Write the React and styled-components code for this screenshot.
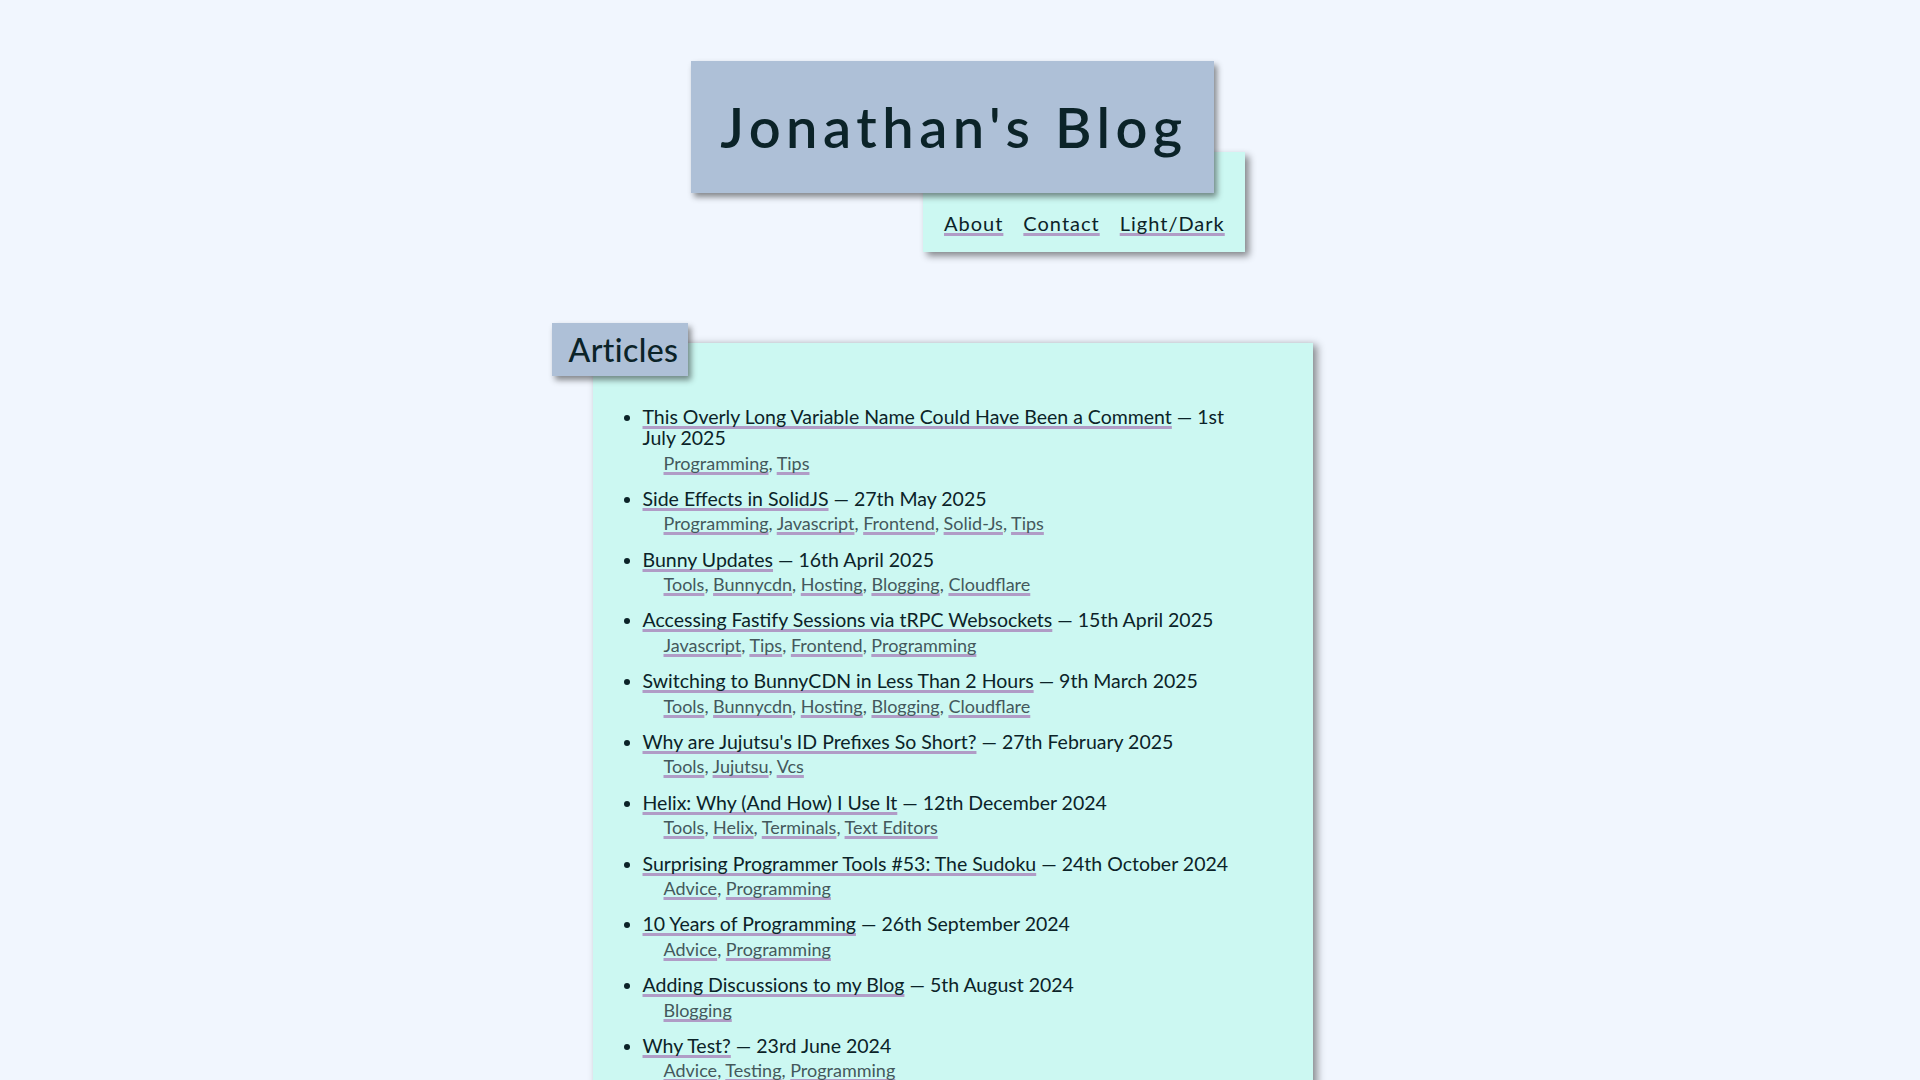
import React from 'react';
import styled, { createGlobalStyle } from 'styled-components';

const GlobalStyle = createGlobalStyle`
  html, body {
    margin: 0;
    padding: 0;
    background: #f1f6fe;
  }
  body {
    font-family: Lato, "Noto Sans", sans-serif;
    color: #0b2328;
  }
`;

// right padding keeps the centre where it sits beside a 15px scrollbar
const Page = styled.div`
  display: flex;
  flex-direction: column;
  align-items: center;
  padding: 61px 15px 50px 0;
`;

const Header = styled.header`
  display: flex;
  flex-direction: column;
  align-items: stretch;
`;

const TitleBox = styled.h1`
  position: relative;
  z-index: 2;
  margin: 0;
  padding: 32px 26px 32px 29px;
  background: #aec0d7;
  box-shadow: 3px 4px 6px rgba(0, 0, 0, 0.45);
  font-size: 56px;
  line-height: 68px;
  font-weight: 600;
  letter-spacing: 5.5px;
  white-space: nowrap;
`;

const Nav = styled.nav`
  position: relative;
  z-index: 1;
  align-self: flex-end;
  margin: -41px -31px 0 0;
  padding: 59px 20px 17px 21px;
  display: flex;
  gap: 20px;
  background: #ccf8f2;
  box-shadow: 4px 4px 7px rgba(0, 0, 0, 0.45);
`;

const Link = styled.a`
  color: #0b2328;
  text-decoration: underline;
  text-decoration-color: #b09cc6;
  text-decoration-thickness: 3px;
  text-underline-offset: 2px;
  text-decoration-skip-ink: none;
  cursor: pointer;
`;

const NavLink = styled(Link)`
  font-size: 20px;
  line-height: 24px;
  letter-spacing: 1px;
`;

const Section = styled.section`
  width: 720px;
  margin-top: 71px;
  display: flex;
  flex-direction: column;
`;

const SectionTitle = styled.h2`
  position: relative;
  z-index: 2;
  align-self: flex-start;
  margin: 0 0 -33px -41px;
  padding: 0 10px 0 17px;
  height: 53px;
  line-height: 53px;
  background: #aec0d7;
  box-shadow: 3px 4px 6px rgba(0, 0, 0, 0.45);
  font-size: 32px;
  font-weight: 500;
  letter-spacing: 0.4px;
`;

const Panel = styled.div`
  position: relative;
  z-index: 1;
  min-height: 1250px;
  padding: 63px 70px 20px 10px;
  background: #ccf8f2;
  box-shadow: 4px 2px 8px rgba(0, 0, 0, 0.45);
`;

const List = styled.ul`
  margin: 0;
  padding-left: 40px;
`;

const Item = styled.li`
  font-size: 19.5px;
  line-height: 21px;
  margin-bottom: 13.3px;
`;

const Tags = styled.div`
  margin: 2.5px 0 0 21px;
  font-size: 18px;
  line-height: 24px;
  color: #44585c;
`;

const TagLink = styled(Link)`
  color: #44585c;
`;

const articles = [
  {
    title: 'This Overly Long Variable Name Could Have Been a Comment',
    date: '1st July 2025',
    tags: ['Programming', 'Tips'],
  },
  {
    title: 'Side Effects in SolidJS',
    date: '27th May 2025',
    tags: ['Programming', 'Javascript', 'Frontend', 'Solid-Js', 'Tips'],
  },
  {
    title: 'Bunny Updates',
    date: '16th April 2025',
    tags: ['Tools', 'Bunnycdn', 'Hosting', 'Blogging', 'Cloudflare'],
  },
  {
    title: 'Accessing Fastify Sessions via tRPC Websockets',
    date: '15th April 2025',
    tags: ['Javascript', 'Tips', 'Frontend', 'Programming'],
  },
  {
    title: 'Switching to BunnyCDN in Less Than 2 Hours',
    date: '9th March 2025',
    tags: ['Tools', 'Bunnycdn', 'Hosting', 'Blogging', 'Cloudflare'],
  },
  {
    title: "Why are Jujutsu's ID Prefixes So Short?",
    date: '27th February 2025',
    tags: ['Tools', 'Jujutsu', 'Vcs'],
  },
  {
    title: 'Helix: Why (And How) I Use It',
    date: '12th December 2024',
    tags: ['Tools', 'Helix', 'Terminals', 'Text Editors'],
  },
  {
    title: 'Surprising Programmer Tools #53: The Sudoku',
    date: '24th October 2024',
    tags: ['Advice', 'Programming'],
  },
  {
    title: '10 Years of Programming',
    date: '26th September 2024',
    tags: ['Advice', 'Programming'],
  },
  {
    title: 'Adding Discussions to my Blog',
    date: '5th August 2024',
    tags: ['Blogging'],
  },
  {
    title: 'Why Test?',
    date: '23rd June 2024',
    tags: ['Advice', 'Testing', 'Programming'],
  },
];

const App = () => {
  return (
    <>
      <GlobalStyle />
      <Page>
        <Header>
          <TitleBox>Jonathan's Blog</TitleBox>
          <Nav>
            <NavLink>About</NavLink>
            <NavLink>Contact</NavLink>
            <NavLink>Light/Dark</NavLink>
          </Nav>
        </Header>

        <Section>
          <SectionTitle>Articles</SectionTitle>
          <Panel>
            <List>
              {articles.map(article => (
                <Item key={article.title}>
                  <Link>{article.title}</Link> — {article.date}
                  <Tags>
                    {article.tags.map((tag, i) => (
                      <React.Fragment key={tag}>
                        {i > 0 && ', '}
                        <TagLink>{tag}</TagLink>
                      </React.Fragment>
                    ))}
                  </Tags>
                </Item>
              ))}
            </List>
          </Panel>
        </Section>
      </Page>
    </>
  );
};

export default App;
